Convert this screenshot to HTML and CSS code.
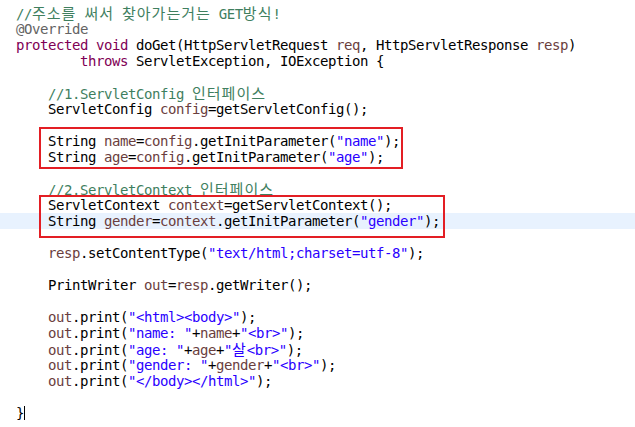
FILE: index.html
```html
<!DOCTYPE html>
<html lang="ko">
<head>
    <meta charset="UTF-8">
    <title>doGet</title>
    <link rel="stylesheet" href="styles.css">
</head>
<body>
    <div class="editor">
        <div class="ln"><span class="cm">//<span class="ko">주소를</span> <span class="ko">써서</span> <span class="ko">찾아가는거는</span> GET<span class="ko">방식</span>!</span></div>
        <div class="ln"><span class="an">@Override</span></div>
        <div class="ln"><span class="kw">protected</span> <span class="kw">void</span> doGet(HttpServletRequest <span class="var">req</span>, HttpServletResponse <span class="var">resp</span>)</div>
        <div class="ln">        <span class="kw">throws</span> ServletException, IOException {</div>
        <div class="ln"> </div>
        <div class="ln">    <span class="cm">//1.ServletConfig <span class="ko">인터페이스</span></span></div>
        <div class="ln">    ServletConfig <span class="var">config</span>=getServletConfig();</div>
        <div class="ln"> </div>
        <div class="ln">    String <span class="var">name</span>=<span class="var">config</span>.getInitParameter(<span class="str">"name"</span>);</div>
        <div class="ln">    String <span class="var">age</span>=<span class="var">config</span>.getInitParameter(<span class="str">"age"</span>);</div>
        <div class="ln"> </div>
        <div class="ln">    <span class="cm">//2.ServletContext <span class="ko">인터페이스</span></span></div>
        <div class="ln">    ServletContext <span class="var">context</span>=getServletContext();</div>
        <div class="ln current">    String <span class="var">gender</span>=<span class="var">context</span>.getInitParameter(<span class="str">"gender"</span>);</div>
        <div class="ln"> </div>
        <div class="ln">    <span class="var">resp</span>.setContentType(<span class="str">"text/html;charset=utf-8"</span>);</div>
        <div class="ln"> </div>
        <div class="ln">    PrintWriter <span class="var">out</span>=<span class="var">resp</span>.getWriter();</div>
        <div class="ln"> </div>
        <div class="ln">    <span class="var">out</span>.print(<span class="str">"&lt;html&gt;&lt;body&gt;"</span>);</div>
        <div class="ln">    <span class="var">out</span>.print(<span class="str">"name: "</span>+<span class="var">name</span>+<span class="str">"&lt;br&gt;"</span>);</div>
        <div class="ln">    <span class="var">out</span>.print(<span class="str">"age: "</span>+<span class="var">age</span>+<span class="str">"<span class="ko">살</span>&lt;br&gt;"</span>);</div>
        <div class="ln">    <span class="var">out</span>.print(<span class="str">"gender: "</span>+<span class="var">gender</span>+<span class="str">"&lt;br&gt;"</span>);</div>
        <div class="ln">    <span class="var">out</span>.print(<span class="str">"&lt;/body&gt;&lt;/html&gt;"</span>);</div>
        <div class="ln"> </div>
        <div class="ln">}<span class="caret"></span></div>

        <div class="mark mark-config"></div>
        <div class="mark mark-context"></div>
    </div>
</body>
</html>
```

FILE: styles.css
```css
body {
    margin: 0;
    background-color: #fff;
}
.editor {
    position: relative;
    width: 635px;
    height: 427px;
    overflow: hidden;
    padding-top: 5px;
    box-sizing: border-box;
    font-family: "DejaVu Sans Mono", "Noto Sans CJK KR", monospace;
    font-size: 14px;
    letter-spacing: -0.43px;
    color: #000;
}
.ln {
    height: 16px;
    line-height: 16px;
    padding-left: 16px;
    white-space: pre;
}
.ln.current {
    background-color: #e8f2fe;
}
.ko {
    font-family: "Noto Sans CJK KR", sans-serif;
    font-size: 15px;
    letter-spacing: 1px;
}
.cm {
    color: #3f7f5f;
}
.an {
    color: #646464;
}
.kw {
    color: #7f0055;
}
.var {
    color: #6a3e3e;
}
.str {
    color: #2a00ff;
}
.caret {
    display: inline-block;
    width: 1px;
    height: 14px;
    vertical-align: -2px;
    background-color: #000;
}
.mark {
    position: absolute;
    border: 2px solid #e31e24;
    box-sizing: border-box;
}
.mark-config {
    left: 39px;
    top: 127px;
    width: 364px;
    height: 42px;
}
.mark-context {
    left: 39px;
    top: 195px;
    width: 406px;
    height: 43px;
}
```
